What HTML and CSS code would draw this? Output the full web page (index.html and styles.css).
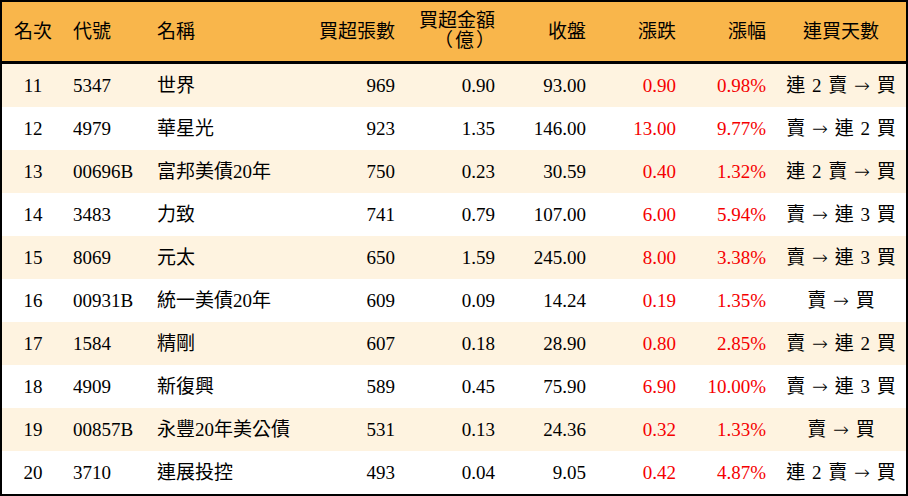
FILE: index.html
```html
<!DOCTYPE html>
<html lang="zh-Hant">
<head>
<meta charset="utf-8">
<title>買超排行</title>
<link rel="stylesheet" href="styles.css">
</head>
<body>
<div class="board">
  <div class="row head">
    <div class="c center">名次</div>
    <div class="c left">代號</div>
    <div class="c left">名稱</div>
    <div class="c right">買超張數</div>
    <div class="c right two">買超金額<br><span class="paren">（億）</span></div>
    <div class="c right">收盤</div>
    <div class="c right">漲跌</div>
    <div class="c right">漲幅</div>
    <div class="c center">連買天數</div>
  </div>
  <div class="row odd">
    <div class="c center">11</div><div class="c left">5347</div><div class="c left">世界</div>
    <div class="c right">969</div><div class="c right">0.90</div><div class="c right">93.00</div>
    <div class="c right up">0.90</div><div class="c right up">0.98%</div><div class="c center days">連 2 賣 <span class="arr">→</span> 買</div>
  </div>
  <div class="row">
    <div class="c center">12</div><div class="c left">4979</div><div class="c left">華星光</div>
    <div class="c right">923</div><div class="c right">1.35</div><div class="c right">146.00</div>
    <div class="c right up">13.00</div><div class="c right up">9.77%</div><div class="c center days">賣 <span class="arr">→</span> 連 2 買</div>
  </div>
  <div class="row odd">
    <div class="c center">13</div><div class="c left">00696B</div><div class="c left">富邦美債20年</div>
    <div class="c right">750</div><div class="c right">0.23</div><div class="c right">30.59</div>
    <div class="c right up">0.40</div><div class="c right up">1.32%</div><div class="c center days">連 2 賣 <span class="arr">→</span> 買</div>
  </div>
  <div class="row">
    <div class="c center">14</div><div class="c left">3483</div><div class="c left">力致</div>
    <div class="c right">741</div><div class="c right">0.79</div><div class="c right">107.00</div>
    <div class="c right up">6.00</div><div class="c right up">5.94%</div><div class="c center days">賣 <span class="arr">→</span> 連 3 買</div>
  </div>
  <div class="row odd">
    <div class="c center">15</div><div class="c left">8069</div><div class="c left">元太</div>
    <div class="c right">650</div><div class="c right">1.59</div><div class="c right">245.00</div>
    <div class="c right up">8.00</div><div class="c right up">3.38%</div><div class="c center days">賣 <span class="arr">→</span> 連 3 買</div>
  </div>
  <div class="row">
    <div class="c center">16</div><div class="c left">00931B</div><div class="c left">統一美債20年</div>
    <div class="c right">609</div><div class="c right">0.09</div><div class="c right">14.24</div>
    <div class="c right up">0.19</div><div class="c right up">1.35%</div><div class="c center days">賣 <span class="arr">→</span> 買</div>
  </div>
  <div class="row odd">
    <div class="c center">17</div><div class="c left">1584</div><div class="c left">精剛</div>
    <div class="c right">607</div><div class="c right">0.18</div><div class="c right">28.90</div>
    <div class="c right up">0.80</div><div class="c right up">2.85%</div><div class="c center days">賣 <span class="arr">→</span> 連 2 買</div>
  </div>
  <div class="row">
    <div class="c center">18</div><div class="c left">4909</div><div class="c left">新復興</div>
    <div class="c right">589</div><div class="c right">0.45</div><div class="c right">75.90</div>
    <div class="c right up">6.90</div><div class="c right up">10.00%</div><div class="c center days">賣 <span class="arr">→</span> 連 3 買</div>
  </div>
  <div class="row odd">
    <div class="c center">19</div><div class="c left">00857B</div><div class="c left">永豐20年美公債</div>
    <div class="c right">531</div><div class="c right">0.13</div><div class="c right">24.36</div>
    <div class="c right up">0.32</div><div class="c right up">1.33%</div><div class="c center days">賣 <span class="arr">→</span> 買</div>
  </div>
  <div class="row">
    <div class="c center">20</div><div class="c left">3710</div><div class="c left">連展投控</div>
    <div class="c right">493</div><div class="c right">0.04</div><div class="c right">9.05</div>
    <div class="c right up">0.42</div><div class="c right up">4.87%</div><div class="c center days">連 2 賣 <span class="arr">→</span> 買</div>
  </div>
</div>
</body>
</html>
```
FILE: styles.css
```css
html, body {
  margin: 0;
  padding: 0;
  background: #ffffff;
}

.board {
  box-sizing: border-box;
  width: 908px;
  height: 496px;
  border: 2px solid #000;
  font-family: "Liberation Serif", "Noto Sans CJK TC", serif;
  font-size: 19px;
  color: #000;
  display: flex;
  flex-direction: column;
}

.row {
  display: grid;
  grid-template-columns: 62px 84px 152px 105px 100px 91px 90px 90px 1fr;
  height: 43px;
  align-items: center;
  background: #ffffff;
}

.row.odd {
  background: #fef3e0;
}

.row.head {
  height: 59px;
  background: #f9b64b;
  border-bottom: 3px solid #000;
}

.c {
  white-space: nowrap;
  line-height: 20px;
}

.center {
  text-align: center;
}

.left {
  text-align: left;
  padding-left: 9px;
}

.right {
  text-align: right;
  padding-right: 10px;
}

.two {
  white-space: normal;
  line-height: 20px;
  padding-bottom: 2px;
}

.paren {
  letter-spacing: 2px;
  margin-right: -2px;
}

.up {
  color: #f50000;
}

.days {
  word-spacing: 2px;
}

.arr {
  font-family: "DejaVu Sans ExtraLight", "DejaVu Sans", sans-serif;
  font-weight: 200;
  font-size: 19px;
}
```
